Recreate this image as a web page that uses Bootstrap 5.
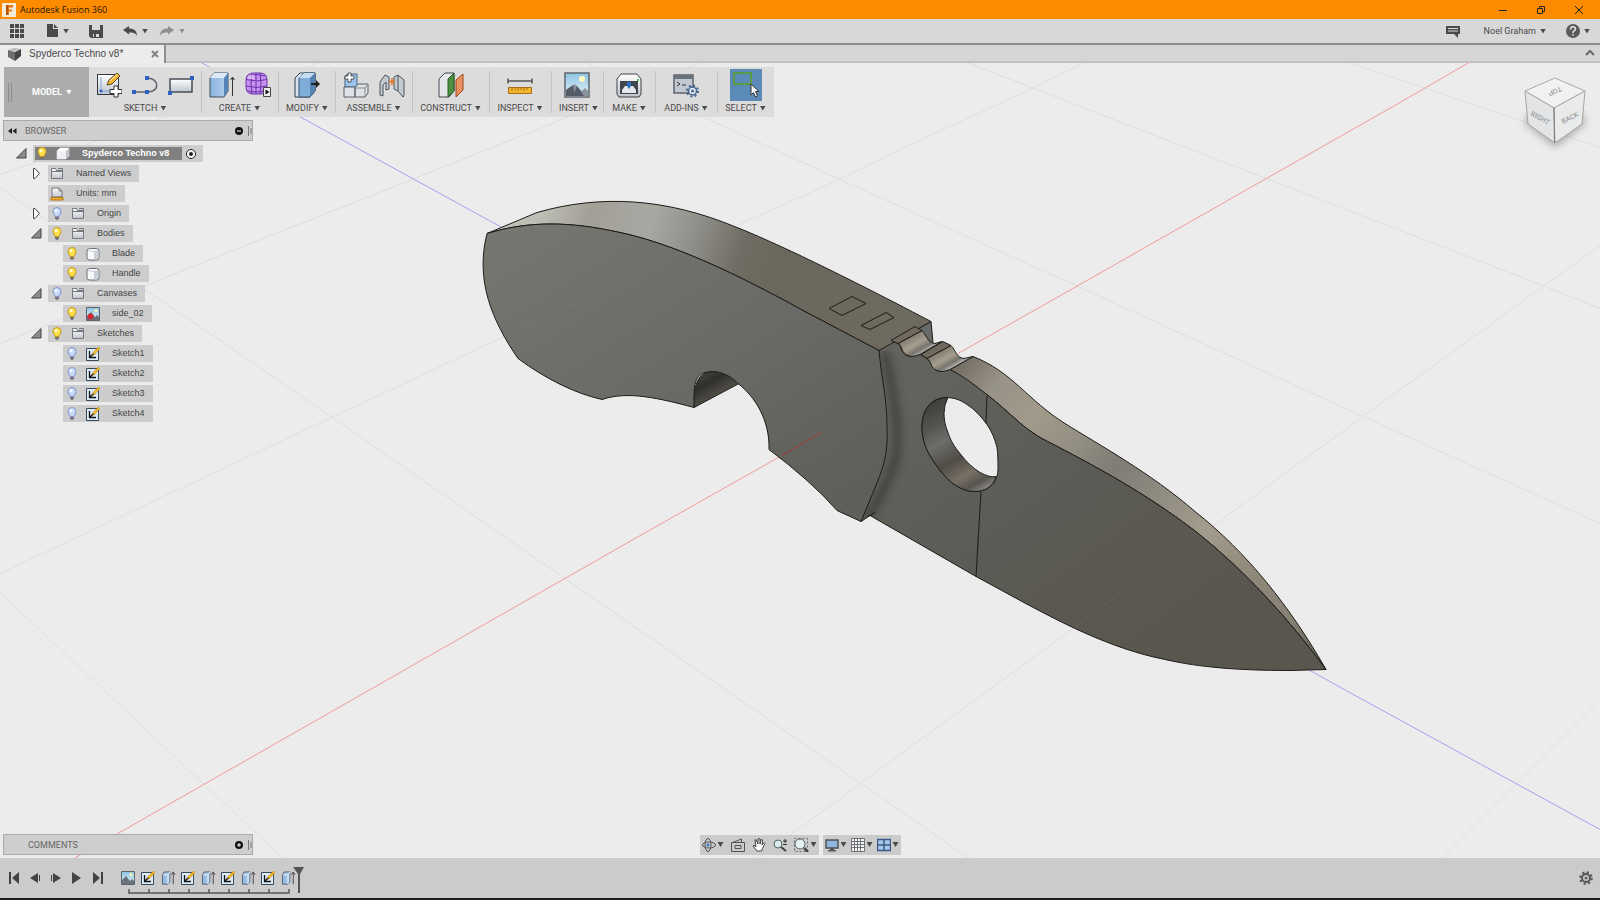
<!DOCTYPE html>
<html lang="en">
<head>
<meta charset="utf-8">
<meta name="viewport" content="width=device-width, initial-scale=1">
<title>Autodesk Fusion 360</title>
<link href="https://cdn.jsdelivr.net/npm/bootstrap@5.3.0/dist/css/bootstrap.min.css" rel="stylesheet">
<style>
  body { font: 9px/12px Roboto, "Liberation Sans", sans-serif; color: #4a4a4a; background: #ececec; }
  svg { display: block; flex: none; }
  button { font: inherit; color: inherit; background: none; border: 0; padding: 0; }
  .caret { width: 6px; height: 5px; background: currentColor; clip-path: polygon(0 0, 100% 0, 50% 100%); flex: none; }

  .titlebar { background: #ff8c00; height: 19px; color: #222; padding: 0 16px 0 2px; }
  .titlebar .app-name { font: 9px/18px "Open Sans", sans-serif; color: #201400; }
  .win-buttons { gap: 28px; }
  .quickbar { background: #d8d8d8; height: 24px; padding: 0 10px; }
  .file-tools { gap: 20px; margin-left: 23px; }
  .history { gap: 12px; }
  .history button { gap: 5px; }
  .tabstrip { background: #d6d6d6; height: 20px; border-top: 2px solid #8e8e8e; border-bottom: 2px solid #c0c0c0; }
  .doc-tab { background: #ececec; width: 166px; height: 18px; border-right: 2px solid #8e8e8e; padding: 0 5px 0 8px; font: 10px/18px "Liberation Sans", sans-serif; }

  .stage { overflow: hidden; min-height: 500px; }
  .scene { position: absolute; inset: 0; width: 100%; height: 100%; }
  .over { position: relative; z-index: 1; }
  .viewcube { position: absolute; top: 8px; right: 8px; z-index: 1; }

  .ribbon { background: #dcdcdc; height: 50px; margin: 4px 0 3px 4px; }
  .workspace-btn { background: #acacac; width: 85px; color: #fff; font-weight: 700; }
  .grip { width: 4px; height: 19px; border: solid #8d8d8d; border-width: 0 1px; }
  .tool-group { padding: 3px 8px 0; height: 46px; position: relative; text-align: center; }
  .tool-group + .tool-group::before { content: ""; position: absolute; left: 0; top: 4px; height: 42px; border-left: 1px solid #c3c3c3; }
  .tool-group .tools { height: 30px; gap: 10px; align-items: center; justify-content: center; }
  .tool-group .caption { line-height: 12px; white-space: nowrap; display: inline-flex; align-items: center; gap: 3px; height: 12px; margin-top: 2px; }
  .g-112 { width: 112px; } .g-76 { width: 77px; } .g-58 { width: 57px; } .g-62 { width: 62px; } .g-52 { width: 52px; }
  .tool-on { background: #5a8ab5; width: 32px; height: 32px; }

  .panel-bar { background: #cecece; border: 1px solid #aaa; width: 250px; height: 21px; margin-left: 3px; padding: 0 0 0 4px; color: #666; }
  .panel-bar .mark-end { margin-right: 5px; }
  .panel-name { margin-left: 8px; }
  .tree { font: 9px/17px "Liberation Sans", sans-serif; margin: 4px 0 0; padding: 0; list-style: none; color: #444; }
  .tree li { height: 17px; margin-bottom: 3px; display: flex; align-items: center; }
  .node { background: #cdcdcd; height: 17px; display: flex; align-items: center; padding: 0 8px 0 4px; }
  .node .kind { margin: 0 12px 0 9px; }
  .node.bare { padding-left: 2px; } .node.bare .kind { margin-left: 0; }
  .twist { width: 17px; height: 17px; }
  .lv0 { padding-left: 16px; } .lv1 { padding-left: 31px; } .lv2 { padding-left: 63px; }
  .node.root { padding: 0 7px 0 2px; }
  .root .title { background: #808080; height: 13px; line-height: 13px; color: #fff; font-weight: 700; padding: 0 8px 0 2px; display: flex; align-items: center; width: 147px; }

  .dock { margin: auto 0 3px; display: grid; grid-template-columns: 1fr auto 1fr; }
  .viewtools { background: #cbcbcb; height: 20px; gap: 7px; padding: 0 2px; }
  .viewtools.compact { gap: 4px; }
  .viewtools button { display: flex; align-items: center; gap: 2px; }
  .timeline { background: #cbcbcb; height: 42px; border-bottom: 2px solid #1c1c22; padding: 0 7px 0 9px; color: #444; }
  .play { gap: 10px; width: 112px; }
  .steps { position: relative; height: 40px; padding-top: 12px; width: 180px; }
  .steps button { width: 20px; height: 16px; display: block; flex: none; }
  .steps .track { position: absolute; left: 0; top: 8px; }
</style>
</head>
<body class="d-flex flex-column min-vh-100">

<svg width="0" height="0" class="position-absolute" aria-hidden="true">
  <defs>
    <linearGradient id="pale" x1="0" y1="0" x2="0" y2="1"><stop offset="0" stop-color="#fff"/><stop offset="1" stop-color="#bfc4ce"/></linearGradient>
    <linearGradient id="sky" x1="0" y1="0" x2="0" y2="1"><stop offset="0" stop-color="#8cc4e2"/><stop offset="1" stop-color="#e8f4fa"/></linearGradient>
    <linearGradient id="steel" x1="0" y1="0" x2="1" y2="0"><stop offset="0" stop-color="#8ab4de"/><stop offset="1" stop-color="#b5d1ee"/></linearGradient>
    <symbol id="bulb-on" viewBox="0 0 10 13"><path d="M3 9.500C3 7.500 1 7 1 4.500a4 4 0 0 1 8 0C9 7 7 7.500 7 9.500z" fill="#ffe04a" stroke="#c49a1c"/><circle cx="4" cy="3.500" r="1.500" fill="#fffbd8"/><path d="M3 10h4v1.500L5.500 13h-1L3 11.500z" fill="#767676"/></symbol>
    <symbol id="bulb-off" viewBox="0 0 10 13"><path d="M3 9.500C3 7.500 1 7 1 4.500a4 4 0 0 1 8 0C9 7 7 7.500 7 9.500z" fill="#c9d9fa" stroke="#7f95cc"/><circle cx="4" cy="3.500" r="1.500" fill="#f5f9ff"/><path d="M3 10h4v1.500L5.500 13h-1L3 11.500z" fill="#767676"/></symbol>
    <symbol id="folder" viewBox="0 0 14 13"><path d="M1.500 11.500V1.500h4l1 2h6v8z" fill="url(#pale)" stroke="#74777c"/><path d="M2 4.500h10M8 1.500h4.500v2" stroke="#74777c" fill="none"/></symbol>
    <symbol id="body" viewBox="0 0 14 14"><rect x="1" y="1.500" width="12" height="11.500" rx="2.500" fill="#f8f9fb" stroke="#6d7279"/><path d="M8 4h4.500v6.500Q12 12.500 10 12.500H8z" fill="#c9ced8"/><path d="M2 3.500q5 2 10 0" stroke="#ccd1d8" fill="none"/></symbol>
    <symbol id="cube" viewBox="0 0 14 13"><path d="M1 4l3-3h9v8l-3 3H1z" fill="#eceef1" stroke="#bcbfc4"/><path d="M1 4h9l3-3v8l-3 3z" fill="#c2c6cc"/><path d="M1 4h9v8H1z" fill="#eef0f3"/><path d="M1 4l3-3h9l-3 3z" fill="#fff"/></symbol>
    <symbol id="units" viewBox="0 0 14 14"><path d="M2 1h7l3 3v6H2z" fill="url(#pale)" stroke="#74777c"/><path d="M9 1v3h3" fill="none" stroke="#74777c"/><path d="M1 10.500h12v2.500H1z" fill="#f2b13a" stroke="#b3720e"/></symbol>
    <symbol id="pic" viewBox="0 0 14 14"><path d="M.5.500h13v13H.5z" fill="url(#sky)" stroke="#5c646c"/><path d="M1 9l4-4 4 5 2-2 2 2v3H1z" fill="#68737d"/><circle cx="10" cy="3.500" r="1.500" fill="#fff6a8"/></symbol>
    <symbol id="sk" viewBox="0 0 14 14"><path d="M.5 1.500h12v12H.5z" fill="#dcebf9" stroke="#3c4a57"/><path d="M3.500 4v6.500H10M3.500 10.500l3-3" stroke="#111" stroke-width="1.300" fill="none"/><path d="M6 8.500l.8-2.800L12.500 0 14 1.500 8.500 7.500z" fill="#f5b82d" stroke="#b07a18" stroke-width=".5"/><path d="M6 8.500l.8-2.500 1.500 1.500z" fill="#443722"/></symbol>
    <symbol id="ext" viewBox="0 0 16 16"><path d="M1 4l2-3h6v10l-2 3H1z" fill="url(#steel)" stroke="#56616e"/><path d="M1.500 4H7l2-3M7 4v10" stroke="#e9f2fb" fill="none"/><path d="M12.500 14V2M10.500 4l2-3 2 3" stroke="#444" fill="none"/></symbol>
    <symbol id="open" viewBox="0 0 11 11"><path d="M.5 10h9.500V.5z" fill="#8b8b8b" stroke="#444"/></symbol>
    <symbol id="shut" viewBox="0 0 9 13"><path d="M1.500 1.500h1.500l4.500 5-4.500 5H1.500z" fill="#fafafa" stroke="#444"/></symbol>
  </defs>
</svg>

<header>
  <div class="titlebar d-flex align-items-center">
    <svg width="14" height="14" viewBox="0 0 14 14"><path d="M0 0h14v14H0z" fill="#f4ead8"/><path d="M4 12V2h7v2.500H7v2h3v2H7V12z" fill="#e27612"/><path d="M4 2h2v10H4z" fill="#b8510a"/></svg>
    <span class="app-name ms-1">Autodesk Fusion 360</span>
    <div class="win-buttons ms-auto d-flex">
      <button aria-label="Minimize"><svg width="10" height="10" viewBox="0 0 10 10"><path d="M1 5.500h8" stroke="#222"/></svg></button>
      <button aria-label="Restore"><svg width="10" height="10" viewBox="0 0 10 10" fill="none" stroke="#222"><path d="M1.500 3.500h5v5h-5zM3.500 3V1.500h5v5H7"/></svg></button>
      <button aria-label="Close"><svg width="10" height="10" viewBox="0 0 10 10"><path d="M1 1l8 8M9 1L1 9" stroke="#222"/></svg></button>
    </div>
  </div>

  <div class="quickbar d-flex align-items-center">
    <button aria-label="Data panel"><svg width="14" height="14" viewBox="0 0 14 14" fill="#4a4a4a"><path d="M0 0h4v4H0zM5 0h4v4H5zM10 0h4v4h-4zM0 5h4v4H0zM5 5h4v4H5zM10 5h4v4h-4zM0 10h4v4H0zM5 10h4v4H5zM10 10h4v4h-4z"/></svg></button>
    <div class="file-tools d-flex align-items-center">
      <button class="d-flex align-items-center gap-1" aria-label="File"><svg width="12" height="14" viewBox="0 0 12 14"><path d="M0 0h6v5h5v8H0z" fill="#4a4a4a"/><path d="M7 0l4 4H7z" fill="#4a4a4a"/></svg><span class="caret"></span></button>
      <button aria-label="Save"><svg width="14" height="14" viewBox="0 0 14 14"><path d="M0 1h14v13H2l-2-2z" fill="#4a4a4a"/><path d="M3 1h8v5H3z" fill="#d8d8d8"/><path d="M4 10h6v3H4z" fill="#d8d8d8"/><path d="M5 10h2v3H5z" fill="#4a4a4a"/></svg></button>
      <div class="history d-flex">
        <button class="d-flex align-items-center" aria-label="Undo"><svg width="14" height="12" viewBox="0 0 14 12"><path d="M0 5l6-4v2.500c5 0 8 2 8 7.500-1-3-4-3.500-8-3.500V9.500z" fill="#4a4a4a"/></svg><span class="caret"></span></button>
        <button class="d-flex align-items-center opacity-50" aria-label="Redo"><svg width="14" height="12" viewBox="0 0 14 12"><path d="M14 5L8 1v2.500C3 3.500 0 5.500 0 11c1-3 4-3.500 8-3.500V9.500z" fill="#4a4a4a"/></svg><span class="caret"></span></button>
      </div>
    </div>
    <div class="ms-auto d-flex align-items-center">
      <button class="me-4" aria-label="Notifications"><svg width="14" height="13" viewBox="0 0 14 13"><path d="M0 1h14v8h-2v4L8 9H0z" fill="#4a4a4a"/><path d="M2 3.500h10M2 6h10" stroke="#d8d8d8"/></svg></button>
      <button class="d-flex align-items-center gap-1 me-3 pe-1">Noel Graham <span class="caret"></span></button>
      <button class="d-flex align-items-center gap-1" aria-label="Help"><svg width="14" height="14" viewBox="0 0 14 14"><circle cx="7" cy="7" r="7" fill="#5a5a5a"/><path d="M4.500 5.500C4.500 2 9.500 2 9.500 5c0 2-2.500 1.500-2.500 4M7 10v1.500" stroke="#e6e6e6" stroke-width="1.500" fill="none"/></svg><span class="caret"></span></button>
    </div>
  </div>

  <div class="tabstrip d-flex">
    <div class="doc-tab d-flex align-items-center">
      <svg width="13" height="13" viewBox="0 0 13 13"><path d="M0 2l6-2 7 1-6 2z" fill="#b9b9b9"/><path d="M0 2l7 2v9L0 9z" fill="#6e6e6e"/><path d="M7 4l6-3v7l-6 5z" fill="#444"/></svg>
      <span class="ms-2">Spyderco Techno v8*</span>
      <button class="ms-auto" aria-label="Close tab"><svg width="8" height="8" viewBox="0 0 8 8"><path d="M1 1l6 6M7 1L1 7" stroke="#808080" stroke-width="2"/></svg></button>
    </div>
    <button class="ms-auto me-1" aria-label="Collapse toolbar"><svg width="12" height="8" viewBox="0 0 12 8"><path d="M2 6l4-4 4 4" stroke="#6a6a6a" stroke-width="2" fill="none"/></svg></button>
  </div>
</header>

<main class="stage position-relative flex-grow-1 d-flex flex-column align-items-start">
  <svg class="scene" viewBox="0 62 1600 796" preserveAspectRatio="xMidYMid slice" role="img" aria-label="Folding knife model">
    <defs>
      <linearGradient id="face" gradientUnits="userSpaceOnUse" x1="540" y1="210" x2="760" y2="560"><stop offset="0" stop-color="#75766f"/><stop offset=".55" stop-color="#696a65"/><stop offset="1" stop-color="#5f5e59"/></linearGradient>
      <linearGradient id="spine" gradientUnits="userSpaceOnUse" x1="490" y1="210" x2="900" y2="350"><stop offset="0" stop-color="#c2c3b8"/><stop offset=".12" stop-color="#bdbdb3"/><stop offset=".22" stop-color="#a29f97"/><stop offset=".36" stop-color="#a8a8a3"/><stop offset=".46" stop-color="#91908b"/><stop offset=".58" stop-color="#706c63"/><stop offset=".68" stop-color="#6c675c"/><stop offset="1" stop-color="#6f6a5f"/></linearGradient>
      <linearGradient id="blade" gradientUnits="userSpaceOnUse" x1="930" y1="380" x2="1150" y2="680"><stop offset="0" stop-color="#62635e"/><stop offset=".5" stop-color="#5b5a54"/><stop offset="1" stop-color="#59564d"/></linearGradient>
      <linearGradient id="edge" gradientUnits="userSpaceOnUse" x1="955" y1="360" x2="1325" y2="668"><stop offset="0" stop-color="#6e695f"/><stop offset=".07" stop-color="#8e887c"/><stop offset=".1" stop-color="#989388"/><stop offset=".2" stop-color="#a29a8a"/><stop offset=".3" stop-color="#948f84"/><stop offset=".4" stop-color="#807b73"/><stop offset=".5" stop-color="#8f8b81"/><stop offset=".62" stop-color="#a39b8c"/><stop offset=".75" stop-color="#918a7a"/><stop offset=".88" stop-color="#858073"/><stop offset="1" stop-color="#5f5c54"/></linearGradient>
      <linearGradient id="bore" gradientUnits="userSpaceOnUse" x1="935" y1="400" x2="985" y2="490"><stop offset="0" stop-color="#3f3e3a"/><stop offset=".2" stop-color="#53524d"/><stop offset=".38" stop-color="#6c6e6b"/><stop offset=".6" stop-color="#504c46"/><stop offset=".78" stop-color="#787065"/><stop offset=".9" stop-color="#57544f"/><stop offset="1" stop-color="#8d8c86"/></linearGradient>
      <linearGradient id="groove" gradientUnits="userSpaceOnUse" x1="904" y1="334" x2="922" y2="365"><stop offset="0" stop-color="#6f695e"/><stop offset=".4" stop-color="#a69e8f"/><stop offset=".58" stop-color="#77736b"/><stop offset=".72" stop-color="#b8b9b6"/><stop offset="1" stop-color="#77756f"/></linearGradient>
      <linearGradient id="notch" gradientUnits="userSpaceOnUse" x1="700" y1="375" x2="715" y2="400"><stop offset="0" stop-color="#44433d"/><stop offset=".35" stop-color="#302e29"/><stop offset="1" stop-color="#57554e"/></linearGradient>
      <filter id="soft" x="-50%" y="-10%" width="200%" height="120%"><feGaussianBlur stdDeviation="4"/></filter>
      <clipPath id="bladeclip"><path d="M870 350H900L967 379V571L870 515 861 521z"/></clipPath>
    </defs>
    <path fill="#ececec" d="M0 0h1600v900H0z"/>
    <g fill="none" stroke="#dfdfdf">
      <path d="M0 174L167 116 320 62M0 343L183 270 535 130 705 60M0 573L470 352 585 298M737 225L837 180 900 149 1032 88 1085 62M758 858L900 754 1072 629 1215 524 1363 416 1600 245M1440 860L1600 699"/>
      <path d="M0 187L133 281 260 367 900 810 969 858M0 592L283 858M584 62L702 116 842 180 900 206 1076 285 1363 416 1600 523M967 62L1266 178 1543 285 1600 308M1349 62L1600 147"/>
    </g>
    <path d="M74 858L649 530 782 455M958 353L1087 280 1400 102 1469 62" stroke="#f29a9a" fill="none"/>
    <path d="M201 62L325 130 502 227M1310 670L1346 690 1600 829" stroke="#a2a2f2" fill="none"/>

    <g stroke="#1c1b18" stroke-linejoin="round" stroke-width="1">
      <path fill="#686a67" d="M879 350L931 321 933 342 915 356z"/>
      <path fill="url(#edge)" d="M950 369L973 356C1012 371 1028 400 1065 423 1100 445 1150 472 1195 511 1247 552 1290 606 1326 669 1290 620 1245 570 1197 532 1140 488 1080 458 1040 437 1020 425 1010 412 988 395z"/>
      <path fill="url(#blade)" fill-rule="evenodd" d="M879 350L891 340 898 343C902 346 901 356 912 356L920 354 927 358C932 361 932 371 942 371L950 369Q966 377 988 395C1010 412 1020 425 1040 437 1080 458 1140 488 1197 532 1245 570 1290 620 1326 669L1290 670C1240 670 1200 667 1165 659 1110 648 1060 622 1000 589L976 576 870 515 861 521V400zM946 397C930 398 922 410 922 427 922 440 927 451 933 460 939 469 945 477 953 483 960 488 967 491 974 491 982 491 987 489 990 486 996 481 998 475 998 468 998 461 998 454 997 447 995 439 992 431 987 424 982 417 975 409 967 404 960 399 953 397 946 397z"/>
      <path fill="url(#bore)" d="M948 397C930 397 922 410 922 427 922 440 927 451 933 460 939 469 945 477 953 483 960 488 967 491 974 491 984 491 993 487 996 476 991 477 986 475 980 472 972 467 966 461 960 453 954 446 950 439 948 432 945 425 944 419 944 413Q944 404 948 397z"/>
      <path d="M987 395L986 423M981 491L976 576" fill="none"/>
      <path fill="url(#groove)" d="M898 343L922 330C927 335 927 342 935 343L942 341 920 354C910 358 906 355 903 351 901 347 901 345 898 343z"/>
      <path fill="#6f695e" d="M921 354L943 341 951 345 927 358z"/>
      <path fill="url(#groove)" transform="translate(29 15)" d="M898 343L922 330C927 335 927 342 935 343L944 341 921 354C911 358 906 355 903 351 901 347 901 345 898 343z"/>
    </g>
    <g clip-path="url(#bladeclip)"><path d="M884 350Q903 430 895 460 886 490 866 518" filter="url(#soft)" fill="none" stroke="#35332e" stroke-width="8" opacity=".7"/></g>
    <path d="M868 516L875 512" stroke="#1c1b18"/>

    <g stroke="#1c1b18" stroke-linejoin="round">
      <path fill="url(#spine)" d="M487 233L537 212C600 194 665 197 737 227 770 240 830 268 931 321L879 350 803 310C716 262 662 241 620 232 570 221 530 220 487 233z"/>
      <path fill="#6f695e" d="M891 340L915 326 922 330 898 343z"/>
      <path fill="url(#notch)" d="M694 407Q692 371 713 371 727 371 739 383z"/>
      <path fill="url(#face)" d="M487 233C530 220 570 221 620 232 662 241 716 262 803 310L879 350C881 375 887 398 887 425 888 450 885 462 878 480L861 521 837 510Q824 495 807 480 788 463 769 449C770 420 755 396 738 383 727 371 713 371 713 371 692 371 694 387 694 407 660 398 628 390 602 399 575 393 545 378 518 358 492 320 475 280 487 233z"/>
      <path fill="none" d="M829 308L852 296 866 303 842 315zM861 325L886 312 894 317 870 329z"/>
    </g>
    <path d="M782 455L821 432" stroke="#a33a35"/>
    <path d="M518 329L585 298M1072 629L1134 583" stroke="#fff" opacity=".05"/>
  </svg>

  <svg class="viewcube" width="80" height="84" viewBox="1512 70 80 84" role="img" aria-label="View cube" font-family="Roboto, sans-serif" font-weight="500" font-size="7" fill="#999da1" text-anchor="middle">
    <path d="M1525 122L1555 146 1586 122 1580 112H1530z" fill="#777" opacity=".6" filter="url(#soft)"/>
    <path d="M1555 77L1585 90 1554 107 1525 90z" fill="#f1f1f1" stroke="#aaa"/>
    <path d="M1525 90L1554 107 1555 142 1528 123z" fill="#e3e4e5" stroke="#a5a5a5"/>
    <path d="M1585 90L1554 107 1555 142 1582 123z" fill="#e9eaea" stroke="#a5a5a5"/>
    <path d="M1554 107l.5 35" stroke="#777"/>
    <text transform="translate(1539 119) rotate(28)">RIGHT</text>
    <text transform="translate(1571 119) rotate(-27)">BACK</text>
    <text transform="translate(1554 88) rotate(157)">TOP</text>
  </svg>

  <nav class="ribbon over d-flex" aria-label="Modeling tools">
    <button class="workspace-btn d-flex align-items-center"><span class="grip ms-1"></span><span class="ms-3 ps-1 me-1">MODEL</span><span class="caret"></span></button>

    <div class="tool-group g-112">
      <div class="tools d-flex">
        <button aria-label="Create sketch"><svg width="26" height="26" viewBox="0 0 26 26"><rect x="1.500" y="2.500" width="21" height="20" fill="url(#pale)" stroke="#363b42"/><path d="M5 19h16M5 19V5" stroke="#7da5d6"/><circle cx="5" cy="19" r="1.500" fill="#2a63b8"/><path d="M11 13l2-5 8-7 3 3-8 8z" fill="#f5b733" stroke="#5a471c"/><path d="M14 9l7-7" stroke="#fff3ae"/><path d="M17 14h4v3.500h4v4h-4V25h-4v-3.500h-4v-4h4z" transform="translate(1 0)" fill="#fff" stroke="#333"/></svg></button>
        <button aria-label="Arc"><svg width="26" height="26" viewBox="0 0 26 26"><path d="M2 20h13c14 0 12-14 0-14" fill="none" stroke="#5e646c" stroke-width="1.500"/><path d="M0 18h4v4H0zM13 18h4v4h-4zM13 4h4v4h-4z" fill="#2f62c0"/></svg></button>
        <button aria-label="Rectangle"><svg width="26" height="26" viewBox="0 0 26 26"><rect x="2" y="7" width="22" height="13" fill="url(#pale)" stroke="#474e57" stroke-width="1.500"/><path d="M22 4h4v4h-4zM0 19h4v4H0z" fill="#2f62c0"/></svg></button>
      </div>
      <button class="caption">SKETCH <span class="caret"></span></button>
    </div>
    <div class="tool-group g-76">
      <div class="tools d-flex">
        <button aria-label="Extrude"><svg width="26" height="26" viewBox="0 0 26 26"><path d="M1 6l4-5h14v18l-4 6H1z" fill="url(#steel)" stroke="#3d4d60"/><path d="M1 6l4-5h14l-4 5z" fill="#dceafa"/><path d="M15 6l4-5v18l-4 6z" fill="#5684b8"/><path d="M23.500 24V6M21.500 8l2-3 2 3" stroke="#333" fill="none"/></svg></button>
        <button aria-label="Create form"><svg width="26" height="26" viewBox="0 0 26 26"><path d="M1 8q0-7 8-7h6q7 0 7 7v7q0 7-7 7H8q-7 0-7-7z" fill="#c692f2" stroke="#6e30aa"/><path d="M1 7.500q11 3 21 0M1 14q11 3 21 0M2 19q10 2 18 0M7 1q-2 10 0 21M15 1q2 10 0 21M3 4q9-3 17 0M11 1v21" stroke="#6e30aa" fill="none"/><path d="M3 3h6v4H3z" fill="#f0dcff" opacity=".6"/><path d="M18.500 15.500h7v9h-7z" fill="#eee" stroke="#444"/><path d="M20.500 17.500v5l4-2.500z" fill="#111"/></svg></button>
      </div>
      <button class="caption">CREATE <span class="caret"></span></button>
    </div>
    <div class="tool-group g-58">
      <div class="tools d-flex"><button aria-label="Press pull"><svg width="26" height="26" viewBox="0 0 26 26"><path d="M1 6l5-5h15v18l-5 6H1z" fill="#d5e2f0" stroke="#333f4e"/><path d="M5 6l5-5h11v18l-5 6H5z" fill="#7fadd9" stroke="#37506c"/><path d="M5 6l5-5h11l-5 5z" fill="#c6def4"/><path d="M16 6l5-5v18l-5 6z" fill="#5384b5"/><path d="M17 11h5V8l4 4-4 4v-3h-5z" fill="#222"/></svg></button></div>
      <button class="caption">MODIFY <span class="caret"></span></button>
    </div>
    <div class="tool-group g-76">
      <div class="tools d-flex">
        <button aria-label="New component"><svg width="26" height="26" viewBox="0 0 26 26"><path d="M2 12V4l3-2h9v13H2z" fill="#9cc3ea" stroke="#4d647e"/><path d="M1 15h11v10H1zM12 16l3-4h10v9l-3 4H12z" fill="#dfe3e8" stroke="#596068"/><path d="M12 16h10v9M22 16l3-4" stroke="#888" fill="none"/><path d="M5 1h3v3h3v3H8v3H5V7H2V4h3z" fill="#fff" stroke="#333" stroke-width=".8"/></svg></button>
        <button aria-label="Joint"><svg width="26" height="26" viewBox="0 0 26 26"><path d="M1 10l5-7 4 2v12l-3 1v-8l-3 3v11l-3-1z" fill="#c3cad2" stroke="#4c535b"/><path d="M25 8l-6-5-4 2v12l4 2 5 6 1-1z" fill="#c3cad2" stroke="#4c535b"/><path d="M19 4v15" stroke="#4c535b"/><path d="M13 6v7M10 9.500h6" stroke="#f2701a" stroke-width="1.500"/></svg></button>
      </div>
      <button class="caption">ASSEMBLE <span class="caret"></span></button>
    </div>
    <div class="tool-group g-76">
      <div class="tools d-flex"><button aria-label="Offset plane"><svg width="26" height="26" viewBox="0 0 26 26"><path d="M1 7l6-6h9v18l-5 6H1z" fill="#e4e7ea" stroke="#444b52"/><path d="M10 7l6-6v18l-6 6z" fill="#4f9142" stroke="#2b5a25"/><path d="M18 8l7-6v16l-7 7z" fill="#ea9361" stroke="#9c451b"/></svg></button></div>
      <button class="caption">CONSTRUCT <span class="caret"></span></button>
    </div>
    <div class="tool-group g-62">
      <div class="tools d-flex"><button aria-label="Measure"><svg width="26" height="26" viewBox="0 0 26 26"><path d="M1 6.500v5M25 6.500v5M1 9h24" stroke="#555" fill="none" stroke-width="1.500"/><path d="M1.500 15.500h23v6h-23z" fill="#f5b52e" stroke="#a86f12"/><path d="M5 16v3M8 16v2M11 16v3M14 16v2M17 16v3M20 16v2" stroke="#a9740f"/></svg></button></div>
      <button class="caption">INSPECT <span class="caret"></span></button>
    </div>
    <div class="tool-group g-52">
      <div class="tools d-flex"><button aria-label="Insert canvas"><svg width="26" height="26" viewBox="0 0 26 26"><path d="M1 1h24v24H1z" fill="url(#sky)" stroke="#5f666d" stroke-width="1.500"/><path d="M2 18l9-6 7 7 3-3 3 3v5H2z" fill="#8a939d"/><path d="M9 24L13 14l7 10zM2 18l7-5 2 11H2z" fill="#525b66"/><circle cx="18" cy="7" r="3" fill="#fff9bd"/></svg></button></div>
      <button class="caption">INSERT <span class="caret"></span></button>
    </div>
    <div class="tool-group g-52">
      <div class="tools d-flex"><button aria-label="3D print"><svg width="26" height="26" viewBox="0 0 26 26"><path d="M1 7l4-5h16l4 5v15l-2 3H3l-2-3z" fill="url(#pale)" stroke="#3c4147"/><path d="M4 9h18v13H4z" fill="#41464e"/><path d="M6 18l3-4h8l3 4v3H6z" fill="#e5e7eb"/><path d="M11 10h4v4l-2 3-2-3z" fill="#2f6dc2"/><circle cx="22" cy="8" r="1" fill="#2aa82a"/></svg></button></div>
      <button class="caption">MAKE <span class="caret"></span></button>
    </div>
    <div class="tool-group g-62">
      <div class="tools d-flex"><button aria-label="Scripts and add-ins"><svg width="26" height="26" viewBox="0 0 26 26"><path d="M1 3h19v18H1z" fill="#c3c9d2" stroke="#5b626b" stroke-width="1.500"/><path d="M1 3h19v4H1z" fill="#6a727c"/><path d="M4 10l3 2-3 2M9 13h4" stroke="#333" fill="none"/><circle cx="19.500" cy="19" r="4" fill="#dfe8f3" stroke="#46648c" stroke-width="1.500"/><circle cx="19.500" cy="19" r="5.500" fill="none" stroke="#46648c" stroke-width="2" stroke-dasharray="2 2.300"/><circle cx="19.500" cy="19" r="1.500" fill="#46648c"/></svg></button></div>
      <button class="caption">ADD-INS <span class="caret"></span></button>
    </div>
    <div class="tool-group g-58">
      <div class="tools d-flex"><button class="tool-on" aria-label="Select"><svg width="32" height="32" viewBox="0 0 32 32"><path d="M4 4h17v11H4z" fill="none" stroke="#58a021" stroke-width="1.500"/><path d="M21 15v11l2.500-2.500 2 4.500 2-1-2-4.500H29z" fill="#fff" stroke="#333"/></svg></button></div>
      <button class="caption">SELECT <span class="caret"></span></button>
    </div>
  </nav>

  <section class="over" aria-label="Browser">
    <div class="panel-bar d-flex align-items-center">
      <button aria-label="Collapse"><svg width="9" height="8" viewBox="0 0 9 8"><path d="M4 1v6L0 4zM8.500 1v6l-4-3z" fill="#222"/></svg></button>
      <span class="panel-name">BROWSER</span>
      <button class="mark-end ms-auto" aria-label="Minimize browser"><svg width="8" height="8" viewBox="0 0 8 8"><circle cx="4" cy="4" r="4" fill="#111"/><path d="M2 4h4" stroke="#fff"/></svg></button>
      <svg width="4" height="10" viewBox="0 0 4 10"><path d="M.5 0v10M3 2v6" stroke="#777"/></svg>
    </div>
    <ul class="tree">
      <li class="lv0"><svg class="twist"><use href="#open" width="11" height="11" y="3"/></svg>
        <div class="node root"><div class="title"><svg width="10" height="13"><use href="#bulb-on"/></svg><svg class="kind" width="14" height="13"><use href="#cube"/></svg>Spyderco Techno v8</div>
        <input type="radio" class="visually-hidden" id="activate" checked><label for="activate" class="ms-1" aria-label="Activate component"><svg width="10" height="10" viewBox="0 0 10 10"><circle cx="5" cy="5" r="4.500" fill="#fff" stroke="#222"/><circle cx="5" cy="5" r="2" fill="#222"/></svg></label></div></li>
      <li class="lv1"><svg class="twist"><use href="#shut" width="9" height="13" x="1" y="2"/></svg><div class="node bare"><svg class="kind" width="14" height="13"><use href="#folder"/></svg>Named Views</div></li>
      <li class="lv1"><span class="twist"></span><div class="node bare"><svg class="kind" width="14" height="14"><use href="#units"/></svg>Units: mm</div></li>
      <li class="lv1"><svg class="twist"><use href="#shut" width="9" height="13" x="1" y="2"/></svg><div class="node"><svg width="10" height="13"><use href="#bulb-off"/></svg><svg class="kind" width="14" height="13"><use href="#folder"/></svg>Origin</div></li>
      <li class="lv1"><svg class="twist"><use href="#open" width="11" height="11" y="3"/></svg><div class="node"><svg width="10" height="13"><use href="#bulb-on"/></svg><svg class="kind" width="14" height="13"><use href="#folder"/></svg>Bodies</div></li>
      <li class="lv2"><div class="node"><svg width="10" height="13"><use href="#bulb-on"/></svg><svg class="kind" width="14" height="14"><use href="#body"/></svg>Blade</div></li>
      <li class="lv2"><div class="node"><svg width="10" height="13"><use href="#bulb-on"/></svg><svg class="kind" width="14" height="14"><use href="#body"/></svg>Handle</div></li>
      <li class="lv1"><svg class="twist"><use href="#open" width="11" height="11" y="3"/></svg><div class="node"><svg width="10" height="13"><use href="#bulb-off"/></svg><svg class="kind" width="14" height="13"><use href="#folder"/></svg>Canvases</div></li>
      <li class="lv2"><div class="node"><svg width="10" height="13"><use href="#bulb-on"/></svg><svg class="kind" width="14" height="14" viewBox="0 0 14 14"><use href="#pic"/><circle cx="4.500" cy="9.500" r="3" fill="#d22a34"/></svg>side_02</div></li>
      <li class="lv1"><svg class="twist"><use href="#open" width="11" height="11" y="3"/></svg><div class="node"><svg width="10" height="13"><use href="#bulb-on"/></svg><svg class="kind" width="14" height="13"><use href="#folder"/></svg>Sketches</div></li>
      <li class="lv2"><div class="node"><svg width="10" height="13"><use href="#bulb-off"/></svg><svg class="kind" width="14" height="14"><use href="#sk"/></svg>Sketch1</div></li>
      <li class="lv2"><div class="node"><svg width="10" height="13"><use href="#bulb-off"/></svg><svg class="kind" width="14" height="14"><use href="#sk"/></svg>Sketch2</div></li>
      <li class="lv2"><div class="node"><svg width="10" height="13"><use href="#bulb-off"/></svg><svg class="kind" width="14" height="14"><use href="#sk"/></svg>Sketch3</div></li>
      <li class="lv2"><div class="node"><svg width="10" height="13"><use href="#bulb-off"/></svg><svg class="kind" width="14" height="14"><use href="#sk"/></svg>Sketch4</div></li>
    </ul>
  </section>

  <div class="dock over w-100">
    <div class="panel-bar d-flex align-items-center">
      <span class="ms-3 ps-1">COMMENTS</span>
      <button class="mark-end ms-auto" aria-label="Expand comments"><svg width="8" height="8" viewBox="0 0 8 8"><circle cx="4" cy="4" r="4" fill="#111"/><path d="M2 4h4M4 2v4" stroke="#fff"/></svg></button>
      <svg width="4" height="10" viewBox="0 0 4 10"><path d="M.5 0v10M3 2v6" stroke="#777"/></svg>
    </div>
    <div class="d-flex gap-1 align-items-center">
      <div class="viewtools d-flex">
        <button aria-label="Orbit"><svg width="14" height="14" viewBox="0 0 14 14" fill="none" stroke="#4f5358"><ellipse cx="7" cy="7" rx="6.500" ry="3"/><ellipse cx="6" cy="7" rx="3" ry="6.500"/><circle cx="6" cy="7" r="1.500" fill="#3578c8" stroke="none"/></svg><span class="caret"></span></button>
        <button aria-label="Look at"><svg width="14" height="14" viewBox="0 0 14 14" fill="none" stroke="#4f5358"><path d="M.5 4.500h13v9H.5zM1.500 4.500l9-3.500v3M4 7.500h6v3H4z"/></svg></button>
        <button aria-label="Pan"><svg width="14" height="14" viewBox="0 0 14 14"><path d="M5 13L1 8l1-1 2 2-1-7 1-.5L6 6V1l1-.5L8 1v5l1-4.500 1.500.5-.5 5 2-2.500 1 1-2.500 5-1 2.500z" fill="#fff" stroke="#444"/></svg></button>
        <button aria-label="Zoom"><svg width="14" height="14" viewBox="0 0 14 14"><circle cx="5" cy="6" r="4" fill="#dbe9ee" stroke="#566"/><path d="M8 9l5 4" stroke="#444" stroke-width="2"/><path d="M10 3h4M12 1v4M10 6.500h4" stroke="#333"/></svg></button>
        <button aria-label="Fit"><svg width="15" height="14" viewBox="0 0 15 14"><path d="M.5.500h13v13H.5z" fill="none" stroke="#666" stroke-dasharray="2 2"/><circle cx="6" cy="6" r="5" fill="#e8f1f1" stroke="#566"/><path d="M10 10l4 4" stroke="#444" stroke-width="2.500"/></svg><span class="caret"></span></button>
      </div>
      <div class="viewtools compact d-flex">
        <button aria-label="Display settings"><svg width="14" height="14" viewBox="0 0 14 14"><path d="M1 2h12v8H1z" fill="#8fb6df" stroke="#4b5158" stroke-width="1.500"/><path d="M5 10h4v2h2v1.500H3V12h2z" fill="#555"/></svg><span class="caret"></span></button>
        <button aria-label="Grid and snaps"><svg width="14" height="14" viewBox="0 0 14 14"><path d="M.5.500h13v13H.5z" fill="#f4f4f4"/><path d="M.5.500h13v13H.5zM3.500 0v14M6.500 0v14M9.500 0v14M0 3.500h14M0 6.500h14M0 9.500h14" fill="none" stroke="#6f7276"/></svg><span class="caret"></span></button>
        <button aria-label="Viewports"><svg width="14" height="14" viewBox="0 0 14 14"><path d="M.5 1.500h13v11H.5zM7 1v12M0 7h14" fill="#a9c7e8" stroke="#3b5a86" stroke-width="1.500"/></svg><span class="caret"></span></button>
      </div>
    </div>
  </div>
</main>

<footer class="timeline d-flex align-items-center">
  <div class="play d-flex">
    <button aria-label="To start"><svg width="11" height="12" viewBox="0 0 11 12"><path d="M0 0h2v12H0zM10 0v12L3 6z" fill="#444"/></svg></button>
    <button aria-label="Step back"><svg width="11" height="12" viewBox="0 0 11 12"><path d="M8 1v10L0 6zM9 3h1v6H9z" fill="#444"/></svg></button>
    <button aria-label="Step forward"><svg width="11" height="12" viewBox="0 0 11 12"><path d="M2 1v10l8-5zM0 3h1v6H0z" fill="#444"/></svg></button>
    <button aria-label="Play"><svg width="11" height="12" viewBox="0 0 11 12"><path d="M0 0v12l9-6z" fill="#444"/></svg></button>
    <button aria-label="To end"><svg width="11" height="12" viewBox="0 0 11 12"><path d="M8 0h2v12H8zM0 0v12l7-6z" fill="#444"/></svg></button>
  </div>
  <div class="steps d-flex">
    <button aria-label="Canvas"><svg width="14" height="14"><use href="#pic"/></svg></button>
    <button aria-label="Sketch1"><svg width="14" height="14"><use href="#sk"/></svg></button>
    <button aria-label="Extrude1"><svg width="16" height="15"><use href="#ext"/></svg></button>
    <button aria-label="Sketch2"><svg width="14" height="14"><use href="#sk"/></svg></button>
    <button aria-label="Extrude2"><svg width="16" height="15"><use href="#ext"/></svg></button>
    <button aria-label="Sketch3"><svg width="14" height="14"><use href="#sk"/></svg></button>
    <button aria-label="Extrude3"><svg width="16" height="15"><use href="#ext"/></svg></button>
    <button aria-label="Sketch4"><svg width="14" height="14"><use href="#sk"/></svg></button>
    <button aria-label="Extrude4"><svg width="16" height="15"><use href="#ext"/></svg></button>
    <svg class="track" width="184" height="30" viewBox="0 0 184 30" fill="none" stroke="#555"><path d="M8 23v4h160v-4M28 23v4M48 23v4M68 23v4M88 23v4M108 23v4M128 23v4M148 23v4" stroke-width="1.500"/><path d="M172 1h11l-4 7v19h-2V8z" fill="#555" stroke="none"/></svg>
  </div>
  <button class="ms-auto" aria-label="Timeline settings"><svg width="14" height="14" viewBox="0 0 14 14" fill="none" stroke="#555"><circle cx="7" cy="7" r="4" stroke-width="2"/><circle cx="7" cy="7" r="5.800" stroke-width="2" stroke-dasharray="2.200 2.355"/><circle cx="7" cy="7" r="1" fill="#555"/></svg></button>
</footer>

<script src="https://cdn.jsdelivr.net/npm/bootstrap@5.3.0/dist/js/bootstrap.bundle.min.js"></script>
</body>
</html>
